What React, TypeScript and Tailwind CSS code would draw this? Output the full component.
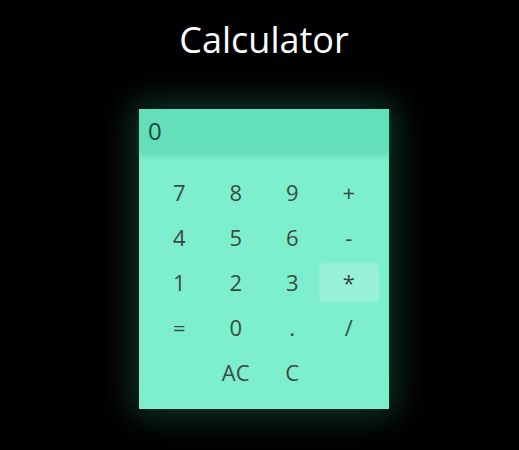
import { useState } from "react";

const keys = ["7", "8", "9", "+", "4", "5", "6", "-", "1", "2", "3", "*", "=", "0", ".", "/", "", "AC", "C", ""];

export default function App() {
  const [display] = useState("0");

  return (
    <div className="min-h-[450px] w-full bg-black font-['Open_Sans',sans-serif] flex flex-col items-center pl-[9px]">
      <h1 className="mt-[16px] text-[36px] leading-[48px] text-white">Calculator</h1>

      <div className="mt-[45px] w-[250px] h-[300px] bg-[#7defcc] shadow-[0_0_32px_6px_rgba(60,200,150,0.28)]">
        {/* Display */}
        <div className="h-[44px] bg-[#63dfb9] shadow-[0_3px_5px_rgba(40,140,110,0.25)] px-[9px] flex items-center text-[24px] text-[#1f4a3c]">
          {display}
        </div>

        {/* Keys */}
        <div className="grid grid-cols-4 px-[12px] pt-[17px]">
          {keys.map((k, i) => (
            <div key={i} className="h-[45px] flex items-center justify-center">
              {k && (
                <button
                  className={`w-[56px] h-[35px] flex items-center justify-center text-[22px] text-[#3a4a45] ${
                    k === "*" ? "bg-[#98f2d9] shadow-[0_0_4px_rgba(255,255,255,0.5)]" : ""
                  }`}
                >
                  {k}
                </button>
              )}
            </div>
          ))}
        </div>
      </div>
    </div>
  );
}
